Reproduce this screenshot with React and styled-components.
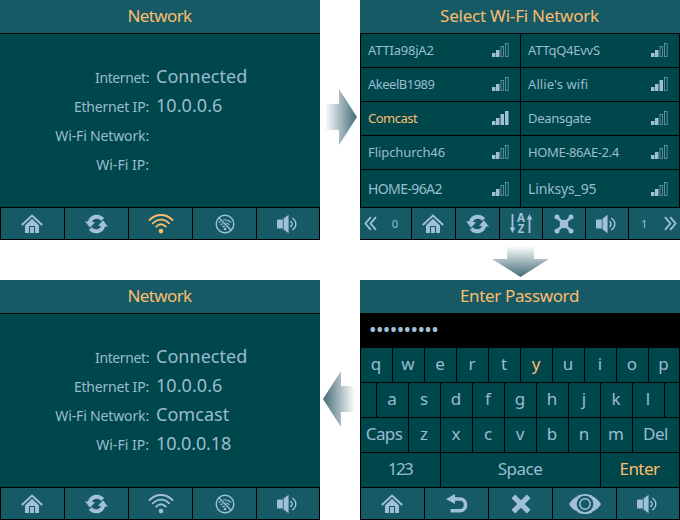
import React from 'react';
import styled, { createGlobalStyle, css } from 'styled-components';

const c = {
  bar: '#155a64',
  body: '#00474b',
  text: '#9abcd0',
  icon: '#a1c0d8',
  accent: '#fcbc6e',
};

const GlobalStyle = createGlobalStyle`
  * { box-sizing: border-box; }
  body { margin: 0; background: #fff; font-family: "Noto Sans", sans-serif; }
`;

const Board = styled.main`
  width: 680px;
  height: 520px;
  display: grid;
  grid-template-columns: 320px 40px 320px;
  grid-template-rows: 240px 40px 240px;
`;

const Panel = styled.section`
  grid-area: ${(p) => p.$area};
  display: flex;
  flex-direction: column;
  background: #000;
  color: ${c.text};
  overflow: hidden;
`;

const TitleBar = styled.header`
  height: 33px;
  flex: none;
  display: flex;
  align-items: center;
  justify-content: center;
  padding: 0 1px 2px 0;
  background: ${c.bar};
  color: ${c.accent};
  font-size: 17px;
  line-height: 23px;
`;

const Label = styled.span`
  white-space: nowrap;
  letter-spacing: ${(p) => p.$track || 0}px;
`;

const StatusBody = styled.div`
  flex: 1;
  margin-top: 1px;
  padding-top: 28px;
  background: ${c.body};
`;

const StatusRow = styled.div`
  height: 29px;
  display: grid;
  grid-template-columns: 149px 1fr;
  column-gap: 7px;
  align-items: baseline;
  line-height: 29px;
`;

const StatusName = styled(Label)`
  font-size: 14px;
  text-align: right;
`;

const StatusValue = styled(Label)`
  font-size: 18px;

  &:empty::before { content: "\\200b"; }
`;

const Toolbar = styled.nav`
  flex: none;
  height: 33px;
  display: grid;
  gap: 1px;
  padding: ${(p) => (p.$flush ? '1px 0' : '1px')};
  grid-template-columns: ${(p) => p.$columns};
`;

const ToolButton = styled.button`
  border: 0;
  padding: ${(p) => p.$pad || '0'};
  display: flex;
  align-items: center;
  justify-content: ${(p) => (p.$pad ? 'space-between' : 'center')};
  background: ${c.bar};
  color: ${(p) => (p.$active ? c.accent : c.icon)};
  font: 11px "Noto Sans", sans-serif;

  svg { display: block; overflow: visible; }
`;

const NetworkGrid = styled.div`
  flex: 1;
  display: grid;
  grid-template-columns: 159px 158px;
  grid-template-rows: repeat(4, 33px) 37px;
  gap: 1px;
  padding: 1px 1px 0;
`;

const NetworkCell = styled.div`
  display: flex;
  align-items: center;
  justify-content: space-between;
  padding: 0 11px ${(p) => (p.$large ? 0 : 2)}px 7px;
  background: ${c.body};
  color: ${(p) => (p.$active ? c.accent : c.text)};
  font-size: ${(p) => (p.$large ? 14 : 13)}px;

  svg { display: block; color: ${c.icon}; }
`;

const PasswordField = styled.div`
  height: 34px;
  flex: none;
  padding-left: 9px;
  line-height: 33px;
  font-size: 20px;
  color: ${c.icon};
`;

const Keyboard = styled.div`
  flex: 1;
  display: grid;
  grid-template-rows: repeat(4, 34px);
  gap: 1px;
  padding: 1px 1px 0;
`;

const KeyRow = styled.div`
  display: grid;
  gap: 1px;
  grid-template-columns: ${(p) => p.$columns};
`;

const Key = styled.div`
  display: flex;
  align-items: center;
  justify-content: center;
  padding: 0 1px 3px 0;
  background: ${c.body};
  font-size: 17px;
  line-height: 23px;
  ${(p) => p.$active && css`color: ${c.accent};`}
`;

const ArrowSlot = styled.div`
  grid-area: ${(p) => p.$area};
  display: flex;
  align-items: flex-start;
  justify-content: ${(p) => p.$justify || 'flex-start'};
  padding: ${(p) => p.$pad};

  svg { display: block; flex: none; }
`;

const HomeIcon = () => (
  <svg width="22" height="20" viewBox="0 0 22 20" fill="none">
    <path d="M.8 11 11 1.5 21.2 11" stroke="currentColor" strokeWidth="2" />
    <path d="M11 4.7 18 11.4V19H4v-7.6z" fill="currentColor" />
    <path d="M8.5 19v-6.5h5V19" stroke={c.bar} strokeWidth="1.1" />
  </svg>
);

const RefreshIcon = () => (
  <svg width="23" height="20" viewBox="0 0 23 20" fill="none">
    <path d="M4.6 8.8C6.3 1.8 14 1 17.6 5.4" stroke="currentColor" strokeWidth="4" />
    <path d="M0 7.2 10 8.2 5 13.8z" fill="currentColor" />
    <path d="M18.4 11.2c-1.7 7-9.4 7.8-13 3.4" stroke="currentColor" strokeWidth="4" />
    <path d="M23 12.8 13 11.8 18 6.2z" fill="currentColor" />
  </svg>
);

const WifiIcon = () => (
  <svg width="26" height="20" viewBox="0 0 26 20" fill="none" stroke="currentColor" strokeWidth="1.8" strokeLinecap="round">
    <path d="M1.5 6C8-.7 18-.7 24.5 6M4.8 9.3c4.9-4.9 11.5-4.9 16.4 0M8.2 12.7c3-3 6.6-3 9.6 0" />
    <circle cx="13" cy="17.1" r="2.3" fill="currentColor" stroke="none" />
  </svg>
);

const WifiOffIcon = () => (
  <svg width="20" height="20" viewBox="0 0 20 20" fill="none" stroke="currentColor">
    <path d="M3.8 8.4c3.8-3.4 8.6-3.4 12.4 0M5.6 10.8c2.8-2.4 6-2.4 8.8 0M7.5 13c1.6-1.3 3.4-1.3 5 0" strokeWidth="1.3" />
    <circle cx="10" cy="15" r="1.3" fill="currentColor" stroke="none" />
    <path d="M3.5 3.5 16.5 16.5" stroke={c.bar} strokeWidth="3" />
    <circle cx="10" cy="10" r="8.8" strokeWidth="1.4" />
    <path d="M3.8 3.8 16.2 16.2" strokeWidth="1.4" />
  </svg>
);

const SpeakerIcon = () => (
  <svg width="21" height="20" viewBox="0 0 21 20" fill="none">
    <path d="M0 6.6q0-1.2 1.2-1.2h4.6v9.2H1.2Q0 14.6 0 13.4zM6.6 4.6 11.6.8V19.2L6.6 15.4z" fill="currentColor" />
    <path d="M13.4 7c2.2 1.7 2.2 4.3 0 6" stroke="currentColor" strokeWidth="1.5" />
    <path d="M15.2 4c4.8 3.2 4.8 8.8 0 12" stroke="currentColor" strokeWidth="1.5" />
  </svg>
);

const SortIcon = () => (
  <svg width="24" height="21" viewBox="0 0 24 21" fill="none" stroke="currentColor">
    <path d="M3.5 1v15M20.5 20V5" strokeWidth="1.8" />
    <path d="M.7 14.5h5.6L3.5 20zM17.7 6.5h5.6L20.5 1z" fill="currentColor" stroke="none" />
    <g fill="currentColor" stroke="none" fontFamily="Noto Sans, sans-serif" fontWeight="700" fontSize="11.5" textAnchor="middle">
      <text x="12" y="9">A</text>
      <text x="12" y="20">Z</text>
    </g>
  </svg>
);

const HubIcon = () => (
  <svg width="20" height="20" viewBox="0 0 20 20" fill="currentColor">
    <path d="M3 3 17 17M17 3 3 17" stroke="currentColor" strokeWidth="2.5" />
    <circle cx="3" cy="3" r="2.5" />
    <circle cx="17" cy="3" r="2.5" />
    <circle cx="3" cy="17" r="2.5" />
    <circle cx="17" cy="17" r="2.5" />
    <circle cx="10" cy="10" r="4.3" />
  </svg>
);

const ChevronsIcon = ({ right }) => (
  <svg width="13" height="15" viewBox="0 0 13 15" fill="none" stroke="currentColor" strokeWidth="1.8">
    <path d={right ? 'M1 1.2 6.4 7.5 1 13.8M6.2 1.2 11.6 7.5 6.2 13.8' : 'M6.8 1.2 1.4 7.5l5.4 6.3M12 1.2 6.6 7.5l5.4 6.3'} />
  </svg>
);

const UndoIcon = () => (
  <svg width="22" height="20" viewBox="0 0 22 20" fill="none">
    <path d="M7 5h7c7.4 0 7.4 11.8 0 11.8H4.5" stroke="currentColor" strokeWidth="3.6" />
    <path d="M0 5 9 0v10z" fill="currentColor" />
  </svg>
);

const CloseIcon = () => (
  <svg width="20" height="20" viewBox="0 0 20 20">
    <path d="M2.3 2.3 17.7 17.7M17.7 2.3 2.3 17.7" stroke="currentColor" strokeWidth="5.2" />
  </svg>
);

const EyeIcon = () => (
  <svg width="32" height="20" viewBox="0 0 32 20" fill="none">
    <path d="M0 10C7-2.5 25-2.5 32 10 25 22.5 7 22.5 0 10z" fill="currentColor" />
    <circle cx="16" cy="10" r="8.3" fill={c.bar} />
    <circle cx="16" cy="10" r="5.2" stroke="currentColor" strokeWidth="1.5" />
    <path d="M9 2.1C13 .4 19 .4 23 2.1M9 17.9c4 1.7 10 1.7 14 0" stroke="currentColor" strokeWidth="1.2" />
  </svg>
);

const bars = [
  { x: 0, h: 4 },
  { x: 4, h: 7 },
  { x: 8.5, h: 11 },
  { x: 13, h: 14 },
];

const SignalIcon = ({ level }) => (
  <svg width="17" height="14" viewBox="0 0 17 14">
    {bars.map(({ x, h }, i) =>
      i < level ? (
        <rect key={x} x={x} y={14 - h} width="3.5" height={h} fill="currentColor" />
      ) : (
        <rect key={x} x={x + 0.5} y={14.5 - h} width="2.6" height={h - 1} fill="none" stroke="currentColor" strokeWidth="0.7" opacity="0.8" />
      )
    )}
  </svg>
);

const FlowArrow = ({ direction }) => {
  const id = `flow-${direction}`;
  const down = direction === 'down';
  const shapes = {
    right: 'M0 15H14V0L32 28 14 56V41H0z',
    left: 'M32 15H18V0L0 28 18 56V41H32z',
    down: 'M15 0V13H0L28.5 31 57 13H42V0z',
  };
  const ends = {
    right: { x1: 0, y1: 0, x2: 1, y2: 0 },
    left: { x1: 1, y1: 0, x2: 0, y2: 0 },
    down: { x1: 0, y1: 0, x2: 0, y2: 1 },
  };
  return (
    <svg width={down ? 57 : 32} height={down ? 31 : 56}>
      <defs>
        <linearGradient id={id} {...ends[direction]}>
          <stop offset="0" stopColor="#fff" />
          <stop offset="1" stopColor="#436b76" />
        </linearGradient>
      </defs>
      <path d={shapes[direction]} fill={`url(#${id})`} />
    </svg>
  );
};

const StatusPanel = ({ area, connected, ssid, address, wifiActive }) => {
  const rows = [
    ['Internet:', -0.4, connected, 0.03],
    ['Ethernet IP:', -0.19, '10.0.0.6', 0.06],
    ['Wi-Fi Network:', -0.15, ssid, 0.04],
    ['Wi-Fi IP:', 0.02, address, -0.12],
  ];
  return (
    <Panel $area={area}>
      <TitleBar><Label $track={-0.6}>Network</Label></TitleBar>
      <StatusBody>
        {rows.map(([name, nameTrack, value, valueTrack]) => (
          <StatusRow key={name}>
            <StatusName $track={nameTrack}>{name}</StatusName>
            <StatusValue $track={valueTrack}>{value}</StatusValue>
          </StatusRow>
        ))}
      </StatusBody>
      <Toolbar $columns="repeat(4, 63px) 62px">
        <ToolButton $pad="0 20px"><HomeIcon /></ToolButton>
        <ToolButton><RefreshIcon /></ToolButton>
        <ToolButton $active={wifiActive}><WifiIcon /></ToolButton>
        <ToolButton><WifiOffIcon /></ToolButton>
        <ToolButton $pad="0 20px"><SpeakerIcon /></ToolButton>
      </Toolbar>
    </Panel>
  );
};

const networks = [
  { name: 'ATTIa98jA2', level: 2, track: -0.21 },
  { name: 'ATTqQ4EvvS', level: 2, track: -0.25 },
  { name: 'AkeelB1989', level: 2, track: -0.5 },
  { name: "Allie's wifi", level: 3, track: 0.1 },
  { name: 'Comcast', level: 4, track: -0.5, active: true },
  { name: 'Deansgate', level: 2, track: -0.3 },
  { name: 'Flipchurch46', level: 2, track: -0.08 },
  { name: 'HOME-86AE-2.4', level: 2, track: -0.4 },
  { name: 'HOME-96A2', level: 2, track: -0.6, large: true },
  { name: 'Linksys_95', level: 2, track: -0.15, large: true },
];

const NetworkListPanel = ({ area }) => (
  <Panel $area={area}>
    <TitleBar><Label $track={-0.22}>Select Wi-Fi Network</Label></TitleBar>
    <NetworkGrid>
      {networks.map((n) => (
        <NetworkCell key={n.name} $active={n.active} $large={n.large}>
          <Label $track={n.track}>{n.name}</Label>
          <SignalIcon level={n.level} />
        </NetworkCell>
      ))}
    </NetworkGrid>
    <Toolbar $flush $columns="51px 43px 43px 42px 42px 42px 1fr">
      <ToolButton $pad="0 13px 1px 4px"><ChevronsIcon />0</ToolButton>
      <ToolButton $pad="0 10px"><HomeIcon /></ToolButton>
      <ToolButton><RefreshIcon /></ToolButton>
      <ToolButton><SortIcon /></ToolButton>
      <ToolButton><HubIcon /></ToolButton>
      <ToolButton $pad="0 10px"><SpeakerIcon /></ToolButton>
      <ToolButton $pad="0 3px 1px 12px">1<ChevronsIcon right /></ToolButton>
    </Toolbar>
  </Panel>
);

const keyRows = [
  {
    columns: 'repeat(9, 31px) 30px',
    keys: ['q', 'w', 'e', 'r', 't', 'y', 'u', 'i', 'o', 'p'],
  },
  {
    columns: '15px repeat(9, 31px) 14px',
    keys: ['', 'a', 's', 'd', 'f', 'g', 'h', 'j', 'k', 'l', ''],
  },
  {
    columns: '47px repeat(7, 31px) 46px',
    keys: ['Caps', 'z', 'x', 'c', 'v', 'b', 'n', 'm', 'Del'],
  },
  { columns: '79px 159px 78px', keys: ['123', 'Space', 'Enter'] },
];
const keyTracking = { Caps: -0.58, Del: -0.5, 123: -1.6, Space: -0.5, Enter: -0.55 };
const highlighted = ['y', 'Enter'];

const PasswordPanel = ({ area }) => (
  <Panel $area={area}>
    <TitleBar><Label $track={-0.35}>Enter Password</Label></TitleBar>
    <PasswordField><Label $track={-0.6}>••••••••••</Label></PasswordField>
    <Keyboard>
      {keyRows.map((row) => (
        <KeyRow key={row.columns} $columns={row.columns}>
          {row.keys.map((k, i) => (
            <Key key={i} $active={highlighted.includes(k)}>
              {k && <Label $track={keyTracking[k]}>{k}</Label>}
            </Key>
          ))}
        </KeyRow>
      ))}
    </Keyboard>
    <Toolbar $columns="repeat(4, 63px) 62px">
      <ToolButton $pad="0 20px"><HomeIcon /></ToolButton>
      <ToolButton><UndoIcon /></ToolButton>
      <ToolButton><CloseIcon /></ToolButton>
      <ToolButton><EyeIcon /></ToolButton>
      <ToolButton $pad="0 20px"><SpeakerIcon /></ToolButton>
    </Toolbar>
  </Panel>
);

export default function App() {
  return (
    <>
      <GlobalStyle />
      <Board>
        <StatusPanel area="1 / 1" connected="Connected" wifiActive />
        <ArrowSlot $area="1 / 2" $pad="89px 0 0 5px">
          <FlowArrow direction="right" />
        </ArrowSlot>
        <NetworkListPanel area="1 / 3" />
        <ArrowSlot $area="2 / 3" $justify="center" $pad="6px 0 0 1px">
          <FlowArrow direction="down" />
        </ArrowSlot>
        <StatusPanel area="3 / 1" connected="Connected" ssid="Comcast" address="10.0.0.18" />
        <ArrowSlot $area="3 / 2" $pad="91px 0 0 3px">
          <FlowArrow direction="left" />
        </ArrowSlot>
        <PasswordPanel area="3 / 3" />
      </Board>
    </>
  );
}
